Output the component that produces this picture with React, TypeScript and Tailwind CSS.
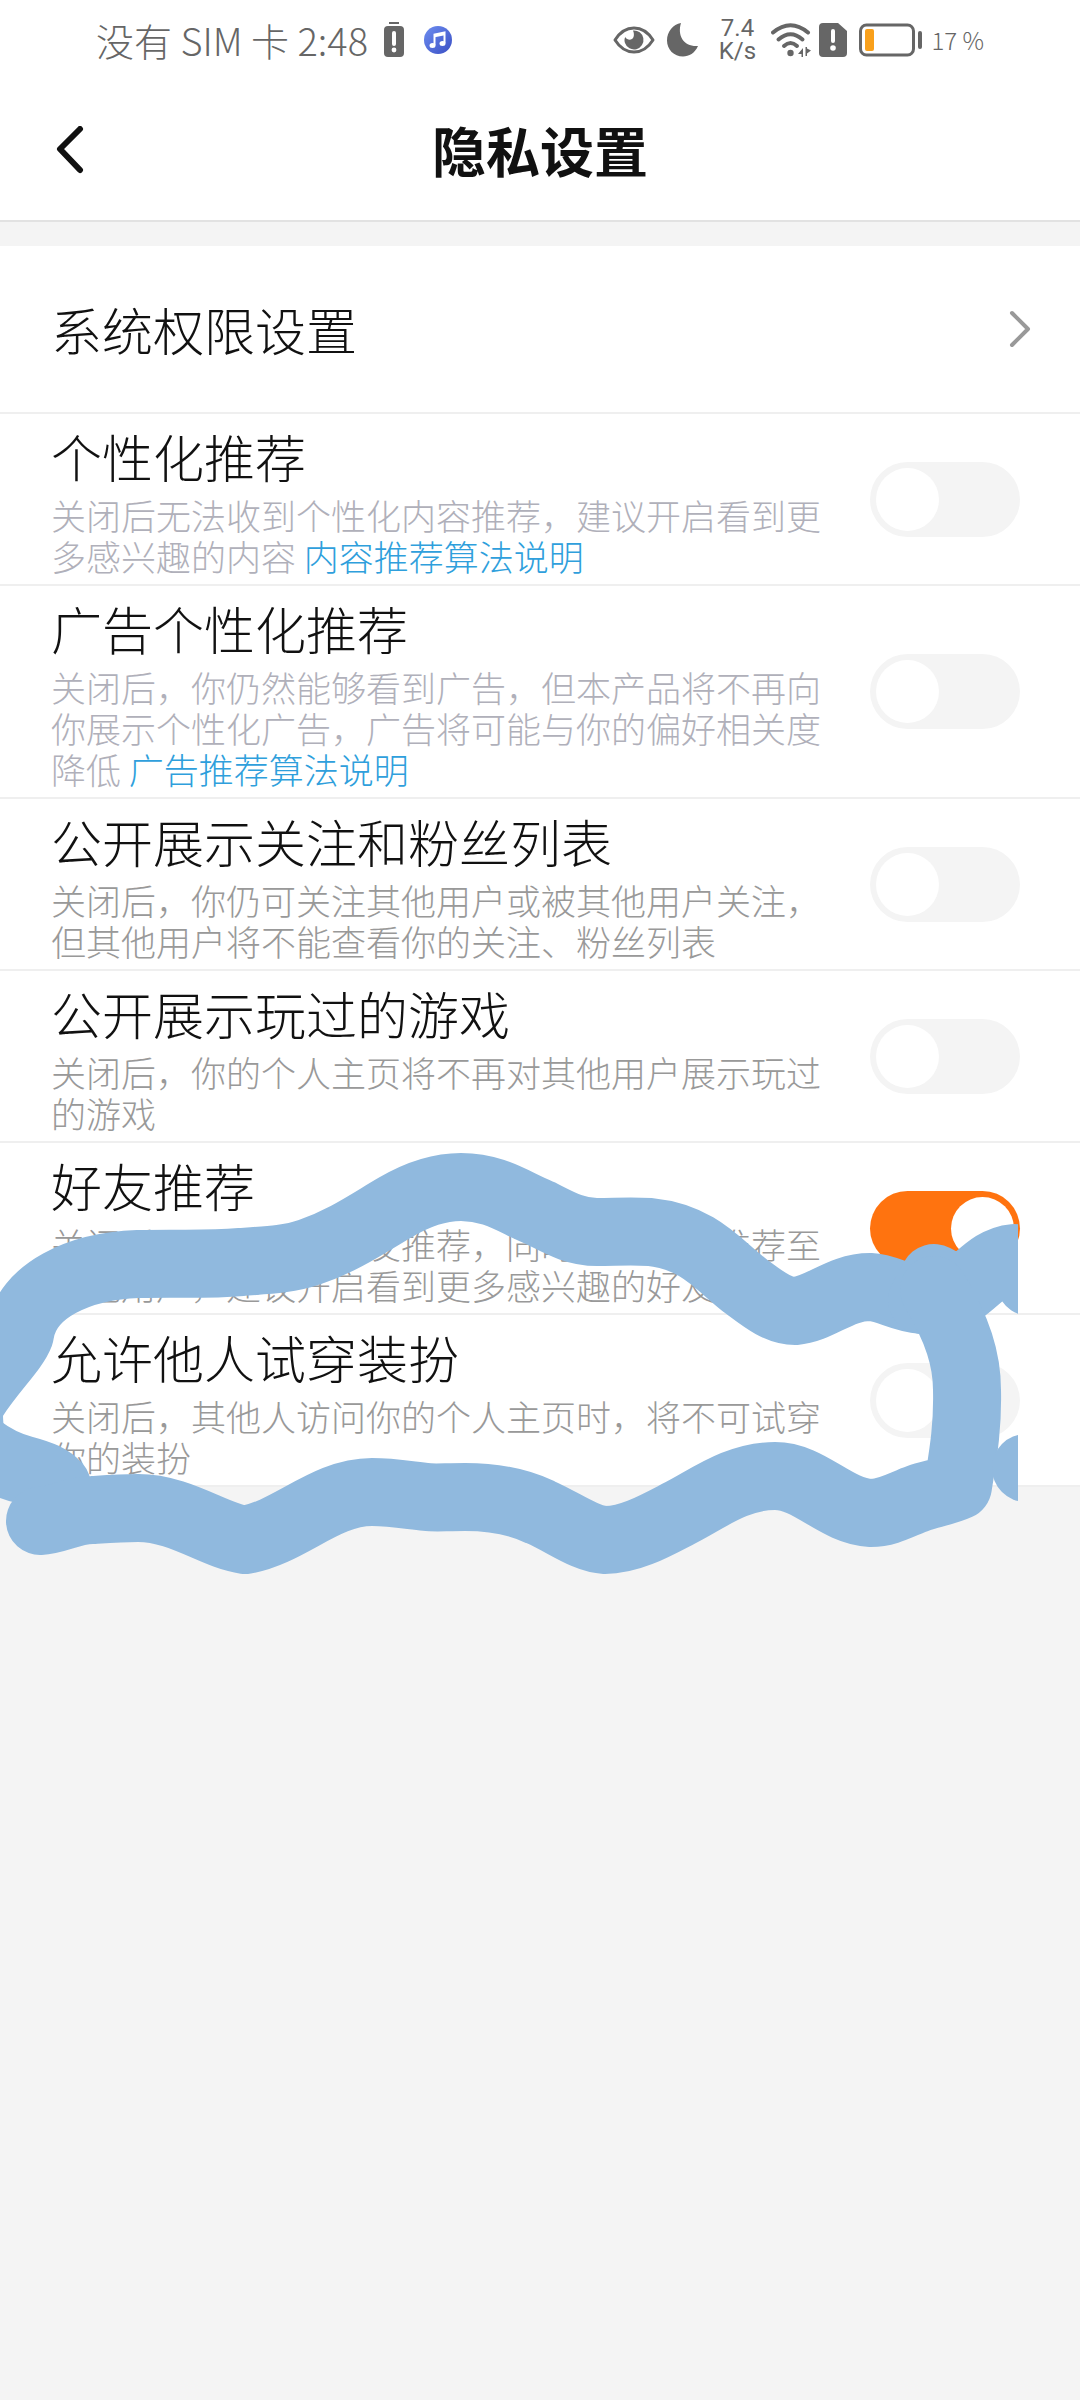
import { useId, useState } from "react";

type Setting = {
  title: string;
  description: string;
  link?: string;
  muted?: boolean;
  enabled?: boolean;
};

const settings: Setting[] = [
  {
    title: "个性化推荐",
    description: "关闭后无法收到个性化内容推荐，建议开启看到更多感兴趣的内容",
    link: "内容推荐算法说明",
    muted: true,
  },
  {
    title: "广告个性化推荐",
    description:
      "关闭后，你仍然能够看到广告，但本产品将不再向你展示个性化广告，广告将可能与你的偏好相关度降低",
    link: "广告推荐算法说明",
    muted: true,
  },
  {
    title: "公开展示关注和粉丝列表",
    description:
      "关闭后，你仍可关注其他用户或被其他用户关注，但其他用户将不能查看你的关注、粉丝列表",
  },
  {
    title: "公开展示玩过的游戏",
    description: "关闭后，你的个人主页将不再对其他用户展示玩过的游戏",
  },
  {
    title: "好友推荐",
    description:
      "关闭后，不再收到好友推荐，同时不会将你推荐至其他用户，建议开启看到更多感兴趣的好友",
    enabled: true,
  },
  {
    title: "允许他人试穿装扮",
    description: "关闭后，其他人访问你的个人主页时，将不可试穿你的装扮",
  },
];

function StatusBar() {
  return (
    <div className="flex h-20 items-center justify-between px-24 text-[#666]">
      <div className="flex items-center">
        <span className="text-[38px] font-light leading-10">没有 SIM 卡 2:48</span>
        <svg className="ml-4 h-9 w-5" viewBox="0 0 20 36" fill="none">
          <rect x="5" y="0" width="10" height="2" fill="#666" />
          <rect x="0" y="4" width="20" height="31" rx="4" fill="#666" />
          <path d="M10 11v11" stroke="#fff" strokeWidth="4" strokeLinecap="round" />
          <circle cx="10" cy="28" r="2.4" fill="#fff" />
        </svg>
        <svg className="ml-5 h-7 w-7" viewBox="0 0 28 28" fill="none">
          <defs>
            <linearGradient id="music" x1="0" y1="0" x2="1" y2="1">
              <stop offset="0" stopColor="#6d8df0" />
              <stop offset="1" stopColor="#3a4fc4" />
            </linearGradient>
          </defs>
          <circle cx="14" cy="14" r="14" fill="url(#music)" />
          <path d="M10.5 19V8.5l10-2V17" stroke="#fff" strokeWidth="2" />
          <path d="M10.5 10l10-2" stroke="#fff" strokeWidth="2.5" />
          <ellipse cx="8.5" cy="19.5" rx="3" ry="2.5" fill="#fff" />
          <ellipse cx="18.5" cy="17.5" rx="3" ry="2.5" fill="#fff" />
        </svg>
      </div>
      <div className="flex items-center">
        <svg className="h-7 w-[42px]" viewBox="0 0 42 28" fill="none">
          <path
            d="M2 14C7 6 13.5 2 21 2s14 4 19 12c-5 8-11.5 12-19 12S7 22 2 14z"
            stroke="#666"
            strokeWidth="3"
            strokeLinejoin="round"
          />
          <path d="M20 4.500a9.500 9.500 0 1 1-8 12.500c-.7-2-.7-4 .2-6 2 3.500 7 3.500 8.300 0 .7-2 .5-4-.5-6.500z" fill="#666" />
        </svg>
        <svg className="ml-3 h-9 w-8" viewBox="0 0 32 36">
          <path d="M14 1C10 14 17 25 31 24 28 31 22 34.5 16 34.5 7 34.5 0 27.5 0 18.5 0 9.5 6 2.5 14 1z" fill="#666" />
        </svg>
        <div className="ml-5 flex w-9 flex-col items-center font-['Roboto',sans-serif] text-2xl leading-[23px]">
          <span>7.4</span>
          <span>K/s</span>
        </div>
        <svg className="ml-4 h-9 w-10" viewBox="0 0 40 36" fill="none">
          <path d="M2 10.5Q19.5-4 37 10.5" stroke="#666" strokeWidth="4" strokeLinecap="round" />
          <path d="M7.5 17.5Q19.5 7 31.5 17.5" stroke="#666" strokeWidth="4" strokeLinecap="round" />
          <path d="M13 24q6.5-6 13 0" stroke="#666" strokeWidth="4" strokeLinecap="round" />
          <circle cx="19.5" cy="31" r="3.2" fill="#666" />
          <path d="M32 26v9h-1.5v-3H27l5-6zM34.500 25v9H36v-2.500l4-3-4-2V25z" fill="#666" />
        </svg>
        <svg className="ml-2 h-[34px] w-7" viewBox="0 0 28 34">
          <path d="M4 0h15l9 8v22a4 4 0 0 1-4 4H4a4 4 0 0 1-4-4V4a4 4 0 0 1 4-4z" fill="#666" />
          <path d="M14 8v10" stroke="#fff" strokeWidth="4" strokeLinecap="round" />
          <circle cx="14" cy="25" r="2.8" fill="#fff" />
        </svg>
        <svg className="ml-3 h-[34px] w-16" viewBox="0 0 64 34" fill="none">
          <rect x="1.5" y="2" width="53" height="30" rx="6" stroke="#666" strokeWidth="3" />
          <rect x="6" y="6" width="9" height="22" rx="2" fill="#f9a01b" />
          <rect x="59" y="8" width="4" height="18" rx="2" fill="#666" />
        </svg>
        <span className="ml-2 text-2xl font-light leading-10">17 %</span>
      </div>
    </div>
  );
}

function SettingRow({ title, description, link, muted, enabled = false }: Setting) {
  const id = useId();
  const [on, setOn] = useState(enabled);

  return (
    <li className="flex items-center gap-9 border-b-2 border-[#efefef] bg-white pl-[51px] pr-[60px]">
      <div className="min-w-0 flex-1 pt-3 pb-2">
        <label htmlFor={id} className="block text-[51px] font-light leading-[60px] text-[#111]">
          {title}
        </label>
        <p
          id={`${id}-description`}
          className={`mt-2 text-[35px] font-light leading-[41px] ${muted ? "text-[#b0b0ba]" : "text-[#999]"}`}
        >
          {description}
          {link && (
            <>
              {" "}
              <a href="#" className="inline-block text-[#2f9fdc]">
                {link}
              </a>
            </>
          )}
        </p>
      </div>
      <input
        id={id}
        type="checkbox"
        role="switch"
        aria-describedby={`${id}-description`}
        checked={on}
        onChange={(e) => setOn(e.target.checked)}
        className="flex h-[75px] w-[150px] shrink-0 appearance-none items-center rounded-full bg-[#f4f4f4] px-1.5 before:block before:size-[63px] before:rounded-full before:bg-white checked:justify-end checked:bg-[#ff730f]"
      />
    </li>
  );
}

// Freehand marker line drawn over the last two rows
function MarkerStroke() {
  return (
    <svg
      className="pointer-events-none absolute left-0 top-0 h-[1600px] w-[1018px]"
      viewBox="0 0 1018 1600"
      fill="none"
      stroke="#90b9de"
      strokeWidth="68"
      strokeLinecap="round"
      strokeLinejoin="round"
      aria-hidden="true"
    >
      <path d="M-30 1440C-30 1420-34 1408-26 1398C-8 1370 14 1350 20 1334C26 1290 80 1266 138 1264C180 1263 205 1265 241 1262C270 1260 290 1259 310 1252C345 1240 370 1222 396 1207C420 1193 440 1187 461 1187C495 1187 515 1203 540 1213C560 1223 575 1232 597 1232C615 1232 630 1231 650 1232C700 1237 720 1267 747 1287C763 1299 778 1311 795 1311C820 1309 840 1287 870 1287C888 1288 900 1298 922 1300" />
      <path d="M-30 1440C-10 1458 8 1466 25 1470C40 1474 50 1478 57 1486" />
      <path d="M922 1300L934 1278L960 1292C980 1278 992 1260 1014 1258L1030 1282" />
      <path d="M934 1290C958 1330 967 1360 967 1390C968 1430 962 1460 958 1486C945 1492 930 1494 919 1498C902 1504 888 1513 871 1513C835 1511 810 1476 775 1476C735 1476 705 1501 678 1514C655 1526 630 1540 605 1540C585 1539 565 1523 540 1512C515 1500 490 1497 465 1497C445 1497 435 1498 427 1497C408 1495 392 1492 372 1492C325 1492 290 1532 245 1540C215 1536 180 1508 138 1508C122 1508 108 1509 93 1510C72 1510 58 1520 40 1521" />
      <path d="M1026 1468h8" />
    </svg>
  );
}

export default function App() {
  return (
    <div className="relative min-h-screen overflow-hidden bg-[#f4f4f4] font-['Noto_Sans_CJK_SC',sans-serif]">
      <header className="border-b-2 border-[#e2e2e2] bg-white">
        <StatusBar />
        <div className="grid h-[140px] grid-cols-[84px_1fr_84px] items-center">
          <button type="button" aria-label="返回" className="flex justify-end">
            <svg className="h-12 w-7" viewBox="0 0 28 48" fill="none">
              <path d="M24 3L4 23l20 21" stroke="#111" strokeWidth="6" strokeLinecap="round" strokeLinejoin="round" />
            </svg>
          </button>
          <h1 className="text-center text-[54px] font-bold leading-[60px] text-[#111]">隐私设置</h1>
        </div>
      </header>
      <main className="mt-6">
        <a
          href="#"
          className="flex h-[168px] items-center justify-between border-b-2 border-[#efefef] bg-white pl-[51px] pr-12"
        >
          <span className="text-[51px] font-light leading-[60px] text-[#111]">系统权限设置</span>
          <svg className="h-10 w-6" viewBox="0 0 24 40" fill="none">
            <path d="M4 4l16 16L4 36" stroke="#999" strokeWidth="4" strokeLinecap="round" strokeLinejoin="round" />
          </svg>
        </a>
        <ul>
          {settings.map((setting) => (
            <SettingRow key={setting.title} {...setting} />
          ))}
        </ul>
      </main>
      <MarkerStroke />
    </div>
  );
}
